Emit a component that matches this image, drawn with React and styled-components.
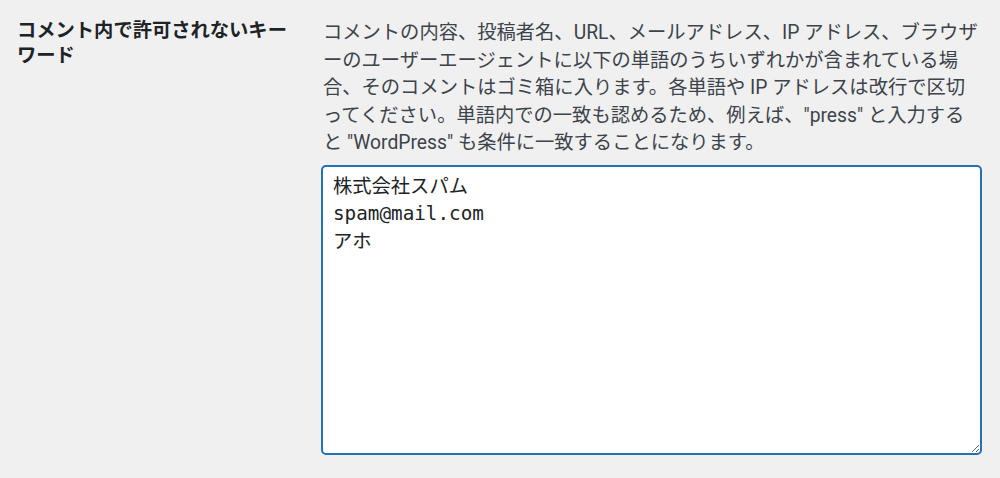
import React from "react";
import styled, { createGlobalStyle } from "styled-components";

const Global = createGlobalStyle`
  html, body { margin: 0; padding: 0; background: #f0f0f1; }
  body {
    font-family: Roboto, "Noto Sans CJK JP", sans-serif;
    color: #3c434a;
  }
`;

const Row = styled.div`
  display: flex;
  align-items: flex-start;
  gap: 24px;
  padding: 18px 18px 0 17px;
`;

const Label = styled.label`
  flex: 0 0 280px;
  font-size: 19.3px;
  line-height: 25px;
  font-weight: 700;
  color: #1d2327;
`;

const Field = styled.div`
  flex: 1;
  display: flex;
  flex-direction: column;
  min-width: 0;
`;

const Description = styled.p`
  margin: 1.25px 0 8px;
  padding-left: 2px;
  font-size: 19.3px;
  line-height: 27.5px;
  color: #3c434a;
`;

const TextArea = styled.textarea`
  box-sizing: border-box;
  width: 100%;
  height: 290px;
  margin: 0;
  padding: 6px 10px;
  border: 2px solid #2271b1;
  border-radius: 5px;
  background: #fff;
  color: #1d2327;
  font-family: "DejaVu Sans Mono", "Noto Sans CJK JP", monospace;
  font-size: 19.3px;
  line-height: 27.5px;
  outline: none;
`;

export default function App() {
  return (
    <>
      <Global />
      <Row>
        <Label htmlFor="disallowed_keys">コメント内で許可されないキーワード</Label>
        <Field>
          <Description>
            コメントの内容、投稿者名、URL、メールアドレス、IP アドレス、ブラウザーのユーザーエージェントに以下の単語のうちいずれかが含まれている場合、そのコメントはゴミ箱に入ります。各単語や IP アドレスは改行で区切ってください。単語内での一致も認めるため、例えば、"press" と入力すると "WordPress" も条件に一致することになります。
          </Description>
          <TextArea
            id="disallowed_keys"
            defaultValue={"株式会社スパム\nspam@mail.com\nアホ"}
            spellCheck={false}
          />
        </Field>
      </Row>
    </>
  );
}
